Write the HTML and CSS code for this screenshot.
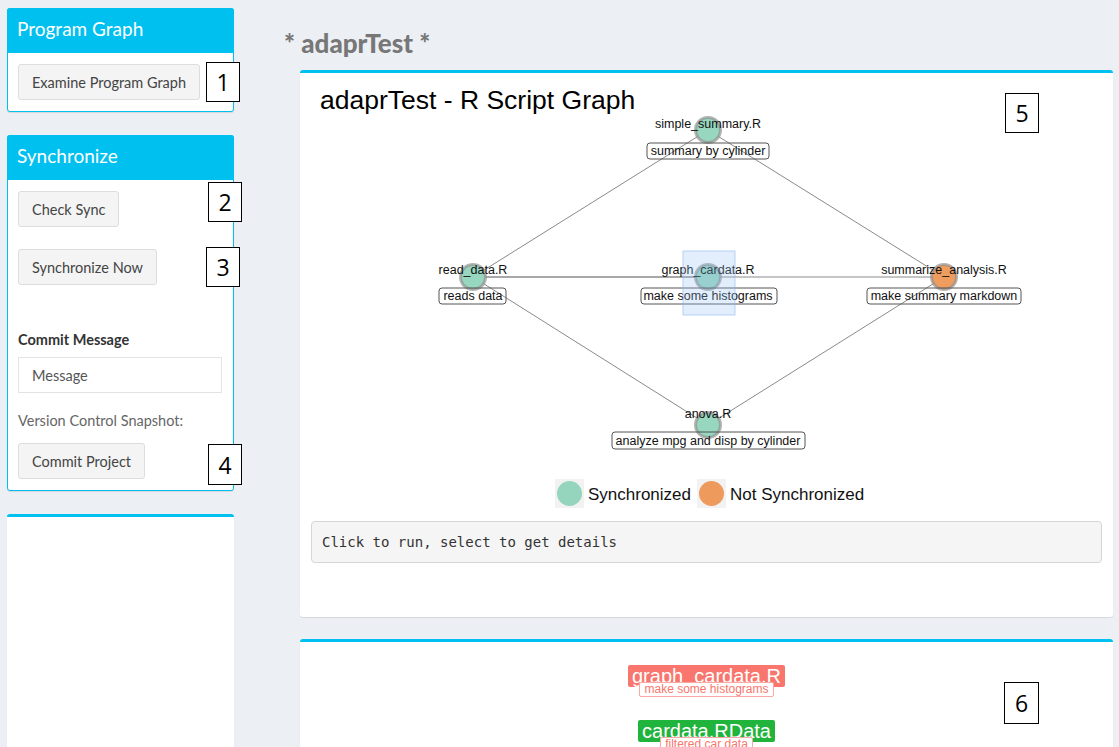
FILE: index.html
```html
<!DOCTYPE html>
<html>
<head>
<meta charset="utf-8">
<link rel="stylesheet" href="styles.css">
</head>
<body>
<div class="page">
  <aside class="sidebar">
    <section class="sbox">
      <div class="sbox-header">Program Graph</div>
      <div class="sbox-body">
        <button class="btn">Examine Program Graph</button>
      </div>
    </section>
    <section class="sbox">
      <div class="sbox-header">Synchronize</div>
      <div class="sbox-body">
        <button class="btn btn-first">Check Sync</button>
        <button class="btn">Synchronize Now</button>
        <label class="field-label">Commit Message</label>
        <input class="field-input" type="text" placeholder="Message">
        <p class="help">Version Control Snapshot:</p>
        <button class="btn">Commit Project</button>
      </div>
    </section>
    <section class="plain-box tall"></section>
  </aside>

  <main class="main">
    <h3 class="main-title">* adaprTest *</h3>
    <section class="plain-box graph-box">
      <div class="graph">
        <h2 class="graph-title">adaprTest - R Script Graph</h2>
        <svg class="graph-svg" width="813" height="440" viewBox="0 0 813 440">
          <defs>
            <marker id="arr" markerWidth="8" markerHeight="8" refX="7" refY="4" orient="auto" markerUnits="userSpaceOnUse">
              <path d="M0,0 L8,4 L0,8 z" fill="#333"/>
            </marker>
          </defs>
          <g class="edges">
            <line x1="173" y1="204" x2="408" y2="57" marker-end="url(#arr)"/>
            <line x1="408" y1="57" x2="644" y2="204" marker-end="url(#arr)"/>
            <line x1="173" y1="204" x2="408" y2="204" marker-end="url(#arr)"/>
            <line x1="408" y1="204" x2="644" y2="204" marker-end="url(#arr)"/>
            <line x1="408" y1="204" x2="173" y2="204" marker-end="url(#arr)"/>
            <line x1="173" y1="204" x2="408" y2="352" marker-end="url(#arr)"/>
            <line x1="408" y1="352" x2="644" y2="204" marker-end="url(#arr)"/>
          </g>
          <g class="nodes">
            <circle class="sync" cx="408" cy="57" r="12.5"/>
            <circle class="sync" cx="173" cy="204" r="12.5"/>
            <circle class="sync" cx="408" cy="204" r="12.5"/>
            <circle class="nosync" cx="644" cy="204" r="12.5"/>
            <circle class="sync" cx="408" cy="352" r="12.5"/>
          </g>
          <g class="label-boxes">
            <rect x="347" y="70" width="122" height="16" rx="3"/>
            <rect x="139" y="215" width="67" height="16" rx="3"/>
            <rect x="341" y="215" width="136" height="16" rx="3"/>
            <rect x="567" y="215" width="154" height="16" rx="3"/>
            <rect x="312" y="359" width="193" height="17" rx="3"/>
          </g>
          <g class="labels">
            <text x="408" y="55">simple_summary.R</text>
            <text x="408" y="82">summary by cylinder</text>
            <text x="173" y="201">read_data.R</text>
            <text x="173" y="227">reads data</text>
            <text x="408" y="201">graph_cardata.R</text>
            <text x="408" y="227">make some histograms</text>
            <text x="644" y="201">summarize_analysis.R</text>
            <text x="644" y="227">make summary markdown</text>
            <text x="408" y="345">anova.R</text>
            <text x="408" y="372">analyze mpg and disp by cylinder</text>
          </g>
          <rect class="selection" x="383" y="178" width="52" height="64"/>
          <g class="legend">
            <rect x="255" y="406" width="29" height="29"/>
            <circle class="sync-flat" cx="269.5" cy="420.5" r="12.5"/>
            <text x="288" y="427">Synchronized</text>
            <rect x="397" y="406" width="29" height="29"/>
            <circle class="nosync-flat" cx="411.5" cy="420.5" r="12.5"/>
            <text x="430" y="427">Not Synchronized</text>
          </g>
        </svg>
      </div>
      <pre class="console">Click to run, select to get details</pre>
    </section>

    <section class="plain-box tall files-box">
      <div class="flow-node">
        <div class="fnode fnode-red">graph_cardata.R</div>
        <div class="fsub">make some histograms</div>
      </div>
      <div class="flow-node">
        <div class="fnode fnode-green">cardata.RData</div>
        <div class="fsub">filtered car data</div>
      </div>
    </section>
  </main>

  <div class="num n1">1</div>
  <div class="num n2">2</div>
  <div class="num n3">3</div>
  <div class="num n4">4</div>
  <div class="num n5">5</div>
  <div class="num n6">6</div>
</div>
</body>
</html>
```

FILE: styles.css
```css
html, body {
  margin: 0;
  padding: 0;
  background: #ecf0f5;
  overflow: hidden;
}
body {
  font-family: Lato, "Open Sans", sans-serif;
  font-size: 14.5px;
  color: #333;
}
.page {
  position: relative;
  display: flex;
  align-items: flex-start;
  width: 1119px;
  height: 747px;
}
.sidebar {
  width: 227px;
  margin: 8px 0 0 7px;
  display: flex;
  flex-direction: column;
  gap: 23px;
}
.sbox {
  background: #fff;
  border: 1px solid #00c0ef;
  border-radius: 3px;
  box-shadow: 0 1px 1px rgba(0,0,0,0.1);
}
.sbox-header {
  background: #00c0ef;
  color: #fff;
  font-size: 19px;
  line-height: 22px;
  padding: 10px 10px 13px 10px;
  margin: -1px -1px 0 -1px;
  border-radius: 3px 3px 0 0;
}
.sbox-body {
  padding: 11px 10px 11px 10px;
  display: flex;
  flex-direction: column;
  align-items: flex-start;
}
.btn {
  font-family: Lato, "Open Sans", sans-serif;
  font-size: 14.5px;
  color: #444;
  background: #f4f4f4;
  border: 1px solid #ddd;
  border-radius: 3px;
  height: 36px;
  padding: 0 13px;
  cursor: pointer;
}
.btn-first {
  margin-bottom: 22px;
}
.field-label {
  font-weight: bold;
  line-height: 20px;
  margin: 45px 0 7px 0;
  color: #333;
}
.field-input {
  box-sizing: border-box;
  width: 204px;
  height: 36px;
  border: 1px solid #e3e3e3;
  padding: 0 13px;
  font-family: Lato, "Open Sans", sans-serif;
  font-size: 14.5px;
  color: #555;
}
.field-input::placeholder {
  color: #555;
}
.help {
  margin: 18px 0 12px 0;
  line-height: 20px;
  color: #666;
}
.plain-box {
  background: #fff;
  border-top: 3px solid #00c0ef;
  border-radius: 3px;
  box-shadow: 0 1px 1px rgba(0,0,0,0.1);
}
.tall {
  height: 400px;
}
.main {
  width: 829px;
  margin-left: 50px;
}
.main-title {
  margin: 30px 0 13px 0;
  font-size: 26px;
  line-height: 27px;
  font-weight: 900;
  color: #777;
}
.graph-box {
  margin-left: 16px;
  padding-bottom: 54px;
}
.graph {
  position: relative;
  height: 440px;
  font-family: "Liberation Sans", Arial, sans-serif;
}
.graph-title {
  margin: 0;
  padding: 12px 0 0 20px;
  font-size: 26.5px;
  line-height: 30px;
  font-weight: normal;
  color: #000;
}
.graph-svg {
  position: absolute;
  left: 0;
  top: 0;
}
.edges line {
  stroke: #8a8a8a;
  stroke-width: 1;
}
.nodes circle {
  stroke: rgba(140,140,140,0.65);
  stroke-width: 3;
}
.sync { fill: #97d6bf; }
.nosync { fill: #ef9c5f; }
.sync-flat { fill: #95d5bd; }
.nosync-flat { fill: #ee9a5d; }
.label-boxes rect {
  fill: none;
  stroke: #555;
  stroke-width: 1;
}
.labels text {
  font-family: "Liberation Sans", Arial, sans-serif;
  font-size: 12.5px;
  fill: #111;
  text-anchor: middle;
}
.selection {
  fill: rgba(150,195,245,0.28);
  stroke: rgba(140,185,240,0.6);
  stroke-width: 1;
}
.legend rect {
  fill: #f2f2f2;
}
.legend text {
  font-family: "Liberation Sans", Arial, sans-serif;
  font-size: 17px;
  fill: #111;
}
.console {
  margin: 8px 11px 0 11px;
  padding: 0 10px;
  height: 40px;
  line-height: 40px;
  background: #f5f5f5;
  border: 1px solid #d6d6d6;
  border-radius: 4px;
  font-family: "DejaVu Sans Mono", "Liberation Mono", monospace;
  font-size: 14px;
  color: #333;
}
.files-box {
  margin: 22px 0 0 16px;
  padding-top: 23px;
  display: flex;
  flex-direction: column;
  align-items: center;
  gap: 23px;
  font-family: "Liberation Sans", Arial, sans-serif;
}
.flow-node {
  display: flex;
  flex-direction: column;
  align-items: center;
}
.fnode {
  color: #fff;
  font-size: 20px;
  line-height: 22px;
  height: 22px;
  padding: 0 4px;
  border-radius: 2px;
}
.fnode-red { background: #f8766d; }
.fnode-green { background: #20b43d; }
.fsub {
  margin-top: -5px;
  background: #fff;
  color: #f8766d;
  border: 1px solid #f8a9a3;
  border-radius: 2px;
  font-size: 12px;
  line-height: 13px;
  padding: 0 4px;
}
.num {
  position: absolute;
  box-sizing: border-box;
  width: 34px;
  height: 40px;
  border: 1px solid #000;
  background: #fff;
  display: flex;
  align-items: center;
  justify-content: center;
  font-family: "Open Sans", sans-serif;
  font-size: 23px;
  color: #000;
}
.n1 { left: 206px; top: 62px; }
.n2 { left: 208px; top: 182px; }
.n3 { left: 206px; top: 247px; }
.n4 { left: 208px; top: 444px; height: 41px; }
.n5 { left: 1005px; top: 93px; }
.n6 { left: 1004px; top: 682px; height: 42px; width: 35px; }
```
